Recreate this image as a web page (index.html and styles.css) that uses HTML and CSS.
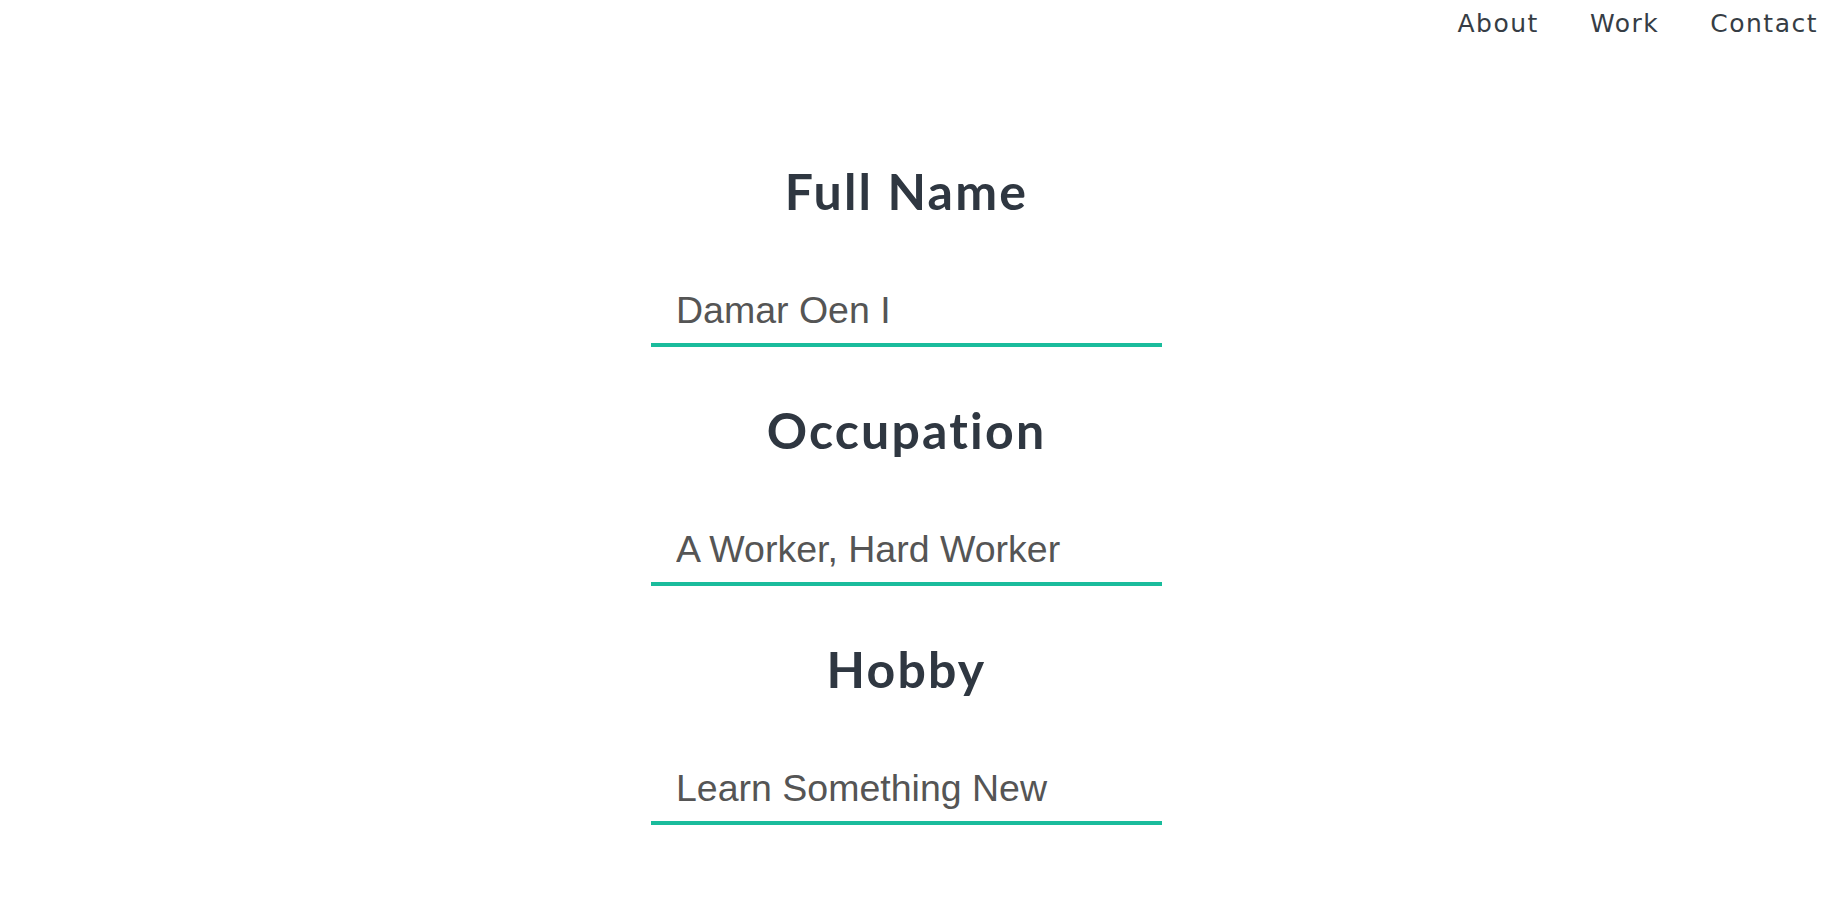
FILE: index.html
```html
<!DOCTYPE html>
<html lang="en">
<head>
<meta charset="utf-8">
<title>Profile</title>
<link rel="stylesheet" href="styles.css">
</head>
<body>
<nav class="nav">
  <a class="nav-link" href="#">About</a>
  <a class="nav-link" href="#">Work</a>
  <a class="nav-link" href="#">Contact</a>
</nav>
<main class="main">
  <form class="form">
    <div class="field">
      <h2 class="field-title">Full Name</h2>
      <input class="field-input" type="text" value="Damar Oen I">
    </div>
    <div class="field">
      <h2 class="field-title">Occupation</h2>
      <input class="field-input" type="text" value="A Worker, Hard Worker">
    </div>
    <div class="field">
      <h2 class="field-title">Hobby</h2>
      <input class="field-input" type="text" value="Learn Something New">
    </div>
  </form>
</main>
</body>
</html>
```

FILE: styles.css
```css
html, body {
  margin: 0;
  padding: 0;
  background: #ffffff;
}

body {
  font-family: "Liberation Sans", Arial, sans-serif;
}

.nav {
  display: flex;
  justify-content: flex-end;
  gap: 51px;
  padding: 4px 21px 0 0;
  height: 40px;
}

.nav-link {
  font-family: "DejaVu Sans", "Noto Sans", sans-serif;
  font-size: 25px;
  letter-spacing: 1.5px;
  line-height: 40px;
  color: #363d45;
  text-decoration: none;
}

.main {
  padding: 117px 26px 0 0;
  display: flex;
  justify-content: center;
}

.form {
  display: flex;
  flex-direction: column;
  width: 511px;
  gap: 53px;
}

.field {
  display: flex;
  flex-direction: column;
  gap: 59px;
}

.field-title {
  margin: 0;
  font-family: "Lato", "Open Sans", sans-serif;
  font-weight: 700;
  font-size: 50px;
  letter-spacing: 2.2px;
  line-height: 60px;
  text-align: center;
  color: #2f3741;
}

.field-input {
  box-sizing: border-box;
  width: 511px;
  margin: 0;
  padding: 9px 25px 11px;
  border: none;
  border-bottom: 4px solid #1abc9c;
  outline: none;
  background: transparent;
  font-family: "Liberation Sans", Arial, sans-serif;
  font-size: 37.5px;
  line-height: normal;
  color: #555555;
}
```
